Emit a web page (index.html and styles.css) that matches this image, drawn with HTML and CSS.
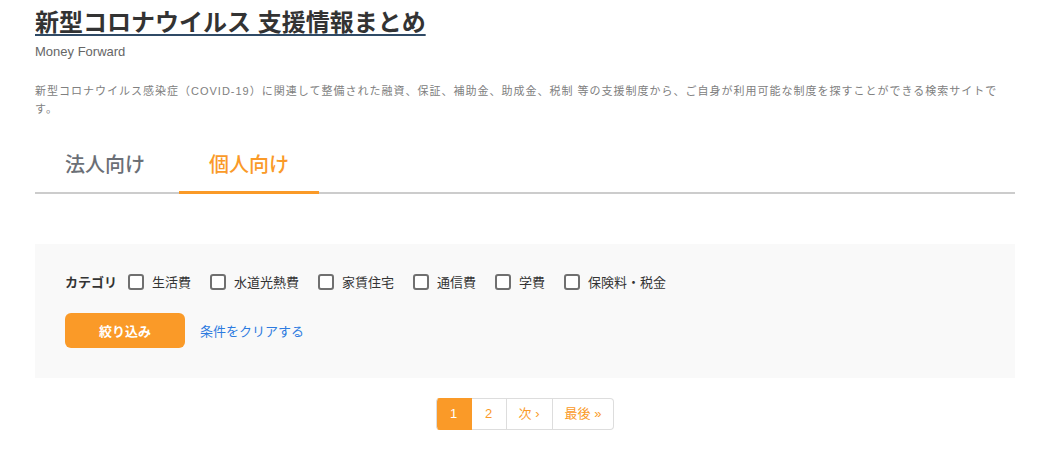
FILE: index.html
```html
<!DOCTYPE html>
<html lang="ja">

<head>
    <meta charset="UTF-8">
    <meta name="viewport" content="width=device-width, initial-scale=1.0">
    <title>新型コロナウイルス 支援情報まとめ</title>
    <link rel="stylesheet" href="styles.css">
</head>

<body>
    <div class="container">
        <header class="site-header">
            <h1 class="site-title"><a href="#">新型コロナウイルス 支援情報まとめ</a></h1>
            <p class="site-owner">Money Forward</p>
            <p class="site-description">新型コロナウイルス感染症（COVID-19）に関連して整備された融資、保証、補助金、助成金、税制 等の支援制度から、ご自身が利用可能な制度を探すことができる検索サイトです。</p>
        </header>

        <nav class="tabs">
            <a class="tab" href="#">法人向け</a>
            <a class="tab tab-active" href="#">個人向け</a>
        </nav>

        <form class="filter">
            <div class="filter-row">
                <span class="filter-label">カテゴリ</span>
                <label class="check"><input type="checkbox" name="category" value="living"><span>生活費</span></label>
                <label class="check"><input type="checkbox" name="category" value="utility"><span>水道光熱費</span></label>
                <label class="check"><input type="checkbox" name="category" value="rent"><span>家賃住宅</span></label>
                <label class="check"><input type="checkbox" name="category" value="telecom"><span>通信費</span></label>
                <label class="check"><input type="checkbox" name="category" value="school"><span>学費</span></label>
                <label class="check"><input type="checkbox" name="category" value="insurance"><span>保険料・税金</span></label>
            </div>
            <div class="filter-actions">
                <button type="submit" class="btn-filter">絞り込み</button>
                <a class="clear-link" href="#">条件をクリアする</a>
            </div>
        </form>

        <nav class="pagination">
            <span class="page page-current">1</span>
            <a class="page" href="#">2</a>
            <a class="page" href="#">次 ›</a>
            <a class="page" href="#">最後 »</a>
        </nav>
    </div>
</body>

</html>
```

FILE: styles.css
```css
body {
    margin: 0;
    font-family: "Liberation Sans", "Noto Sans CJK JP", sans-serif;
    color: #333333;
    background-color: #ffffff;
}

a {
    text-decoration: none;
}

.container {
    width: 980px;
    margin: 0 auto;
}

.site-header {
    padding-top: 6px;
}

.site-title {
    margin: 0;
    font-size: 24px;
    line-height: 34px;
    font-weight: bold;
}

.site-title a {
    color: #333333;
    text-decoration: underline;
    text-decoration-color: #2f4a66;
    text-underline-offset: 3px;
}

.site-owner {
    margin: 2px 0 0;
    font-size: 13px;
    line-height: 20px;
    color: #666666;
}

.site-description {
    margin: 20px 0 0;
    font-size: 11px;
    line-height: 18px;
    letter-spacing: 1px;
    color: #808080;
}

.tabs {
    display: flex;
    gap: 4px;
    margin-top: 20px;
    border-bottom: 2px solid #cccccc;
}

.tab {
    width: 140px;
    text-align: center;
    font-size: 20px;
    line-height: 30px;
    padding: 12px 0 11px;
    color: #6b6f76;
    font-weight: 500;
    margin-bottom: -2px;
    border-bottom: 3px solid transparent;
}

.tab-active {
    color: #fa9a28;
    border-bottom-color: #fa9a28;
}

.filter {
    margin-top: 50px;
    background-color: #f9f9f9;
    padding: 28px 30px 30px;
}

.filter-row {
    display: flex;
    align-items: center;
    gap: 19px;
}

.filter-label {
    font-size: 13px;
    font-weight: bold;
    color: #333333;
    margin-right: -8px;
}

.check {
    display: flex;
    align-items: center;
    gap: 8px;
    font-size: 13px;
    color: #333333;
}

.check input {
    appearance: none;
    width: 16px;
    height: 16px;
    margin: 0;
    border: 2px solid #707070;
    border-radius: 3px;
    background-color: #ffffff;
}

.filter-actions {
    display: flex;
    align-items: center;
    gap: 15px;
    margin-top: 22px;
}

.btn-filter {
    width: 120px;
    height: 35px;
    border: none;
    border-radius: 6px;
    background-color: #fa9a28;
    color: #ffffff;
    font-family: inherit;
    font-size: 13px;
    font-weight: bold;
    cursor: pointer;
}

.clear-link {
    font-size: 13px;
    color: #2d7be0;
}

.pagination {
    display: flex;
    justify-content: center;
    margin-top: 20px;
}

.page {
    display: block;
    padding: 0 12px;
    min-width: 10px;
    text-align: center;
    font-size: 13px;
    line-height: 30px;
    color: #fa9a28;
    border: 1px solid #dddddd;
    border-left: none;
}

.page:first-child {
    border-left: 1px solid #dddddd;
    border-radius: 4px 0 0 4px;
}

.page:last-child {
    border-radius: 0 4px 4px 0;
}

.page-current {
    background-color: #fa9a28;
    border-color: #fa9a28;
    color: #ffffff;
}
```
